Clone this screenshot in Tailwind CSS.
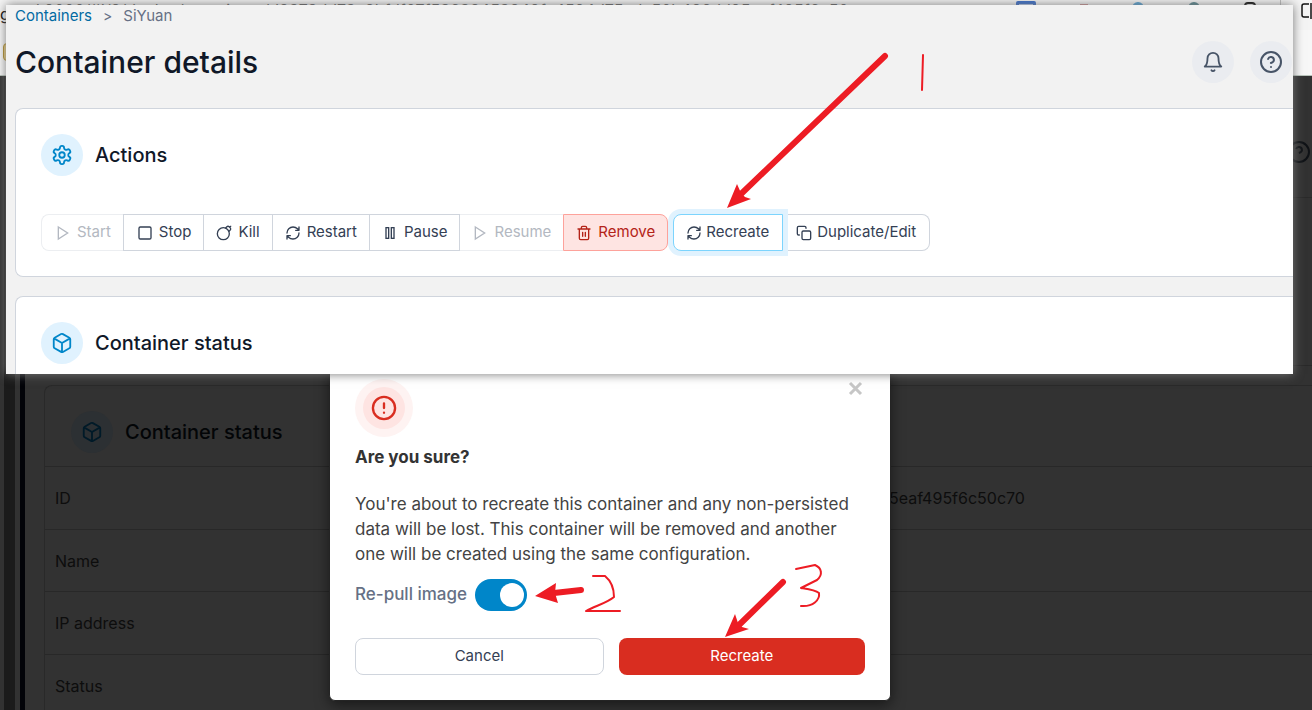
<!DOCTYPE html>
<html lang="en">
  <head>
    <meta charset="UTF-8" />
    <meta name="viewport" content="width=device-width, initial-scale=1.0" />
    <title>Container details</title>
    <script src="https://cdn.jsdelivr.net/npm/@tailwindcss/browser@4"></script>
  </head>
  <body class="relative h-screen overflow-hidden bg-[#323232] font-['Inter','Liberation_Sans',sans-serif] text-[#101828]">
    <!-- Shared icon shapes -->
    <svg class="hidden">
      <symbol id="play" viewBox="0 0 24 24"><path d="m5 3 14 9-14 9V3z" /></symbol>
      <symbol id="refresh" viewBox="0 0 24 24">
        <path d="M3 12a9 9 0 0 1 9-9 9.75 9.75 0 0 1 6.74 2.74L21 8M21 3v5h-5M21 12a9 9 0 0 1-9 9 9.75 9.75 0 0 1-6.74-2.74L3 16M8 16H3v5" />
      </symbol>
      <symbol id="box" viewBox="0 0 24 24">
        <path d="M21 8a2 2 0 0 0-1-1.730l-7-4a2 2 0 0 0-2 0l-7 4A2 2 0 0 0 3 8v8a2 2 0 0 0 1 1.730l7 4a2 2 0 0 0 2 0l7-4A2 2 0 0 0 21 16ZM3.300 7 12 12l8.700-5M12 22V12" />
      </symbol>
      <symbol id="help" viewBox="0 0 24 24">
        <circle cx="12" cy="12" r="10" />
        <path d="M9.090 9a3 3 0 0 1 5.830 1c0 2-3 3-3 3M12 17h.01" />
      </symbol>
    </svg>

    <div class="flex h-full flex-col">
      <!-- Browser toolbar -->
      <div class="flex h-[76px] shrink-0 flex-col justify-between border-b border-[#b9c4bb] bg-[#f7f7f7]">
        <div class="flex h-[30px] items-start justify-between bg-[#f4f4f4]">
          <div class="flex items-start whitespace-nowrap text-base leading-5 text-[#555]">
            <span class="mt-1 w-[30px] text-black">g</span>
            <span>d 9000/#!/2/docker/containers/d8373dd73c8bfdf07f53638453849fe4594d75cdc50b426dd95eaf495f6c50</span>
          </div>
          <div class="flex items-start">
            <div class="mt-px mr-[44px] h-3 w-5 rounded-xs border-3 border-[#2f66c8] bg-[#b8cdf2]"></div>
            <div class="mt-1 mr-[44px] h-3 w-2 bg-[#c98b8b]"></div>
            <div class="mt-0.5 mr-[44px] h-3 w-3 rounded-full bg-[#4a9bd0]"></div>
            <div class="mt-0.5 mr-[44px] h-3 w-3 rounded-full bg-[#4b7d87]"></div>
            <div class="mt-0.5 mr-6 h-3 w-3 rounded-sm border-2 border-black"></div>
            <div class="mr-5 h-5 w-px bg-[#bbb]"></div>
            <svg class="mt-[3px] h-4 w-[11px]" fill="none" stroke="#111" stroke-width="1.500"><path d="M8 1H3a2 2 0 0 0-2 2v9a2 2 0 0 0 2 2h5M10 0v17" /></svg>
          </div>
        </div>
        <div class="h-[45px] pt-[13px] pl-[3px]">
          <div class="h-[18px] w-4 rounded-sm border border-[#b08a1e] bg-[#e5c877]"></div>
        </div>
      </div>

      <!-- Dimmed page -->
      <div class="flex min-h-0 grow">
        <div class="w-1 bg-[#323232]"></div>
        <div class="w-[11px] bg-[#1b1b1b]"></div>
        <div class="w-[5px] bg-[#323232]"></div>
        <div class="w-[5px] bg-[#020308]"></div>
        <div class="flex grow flex-col">
          <div class="flex h-[122px] shrink-0 items-start justify-end border-b border-[#2a2a2a] pt-16 pr-px">
            <svg class="size-[24px] fill-none stroke-[#0f1216] stroke-2"><use href="#help" /></svg>
          </div>
          <div class="h-[168px] shrink-0 border-b border-[#292929]"></div>
          <div class="mt-[19px] ml-[19px] grow rounded-tl-lg border-t border-l border-[#292929]">
            <div class="flex h-20 items-center gap-3 pt-3 pl-[26px]">
              <div class="flex size-[42px] items-center justify-center rounded-full bg-[#2c3033]">
                <svg class="size-[22px] fill-none stroke-[#001a28] stroke-2"><use href="#box" /></svg>
              </div>
              <h2 class="text-xl font-medium text-[#030507]">Container status</h2>
            </div>
            <table class="w-full text-base text-[#0d0d0d]">
              <tbody>
                <tr class="h-[63px] border-t border-[#282828]"><td class="w-[844px] pl-2.5">ID</td><td>5eaf495f6c50c70</td></tr>
                <tr class="h-[62px] border-t border-[#282828]"><td class="pl-2.5">Name</td><td></td></tr>
                <tr class="h-[63px] border-t border-[#282828]"><td class="pl-2.5">IP address</td><td></td></tr>
                <tr class="h-[62px] border-t border-[#282828]"><td class="pl-2.5">Status</td><td></td></tr>
              </tbody>
            </table>
          </div>
        </div>
      </div>
    </div>

    <!-- Confirm dialog -->
    <div role="dialog" aria-labelledby="confirm-title" class="absolute bottom-[9px] left-[329px] w-[562px] rounded-md border border-[#242424] bg-white px-[25px] pt-6 pb-[25px] shadow-[0_4px_14px_rgba(0,0,0,0.5)]">
      <div class="flex items-start justify-between">
        <div class="flex size-[58px] items-center justify-center rounded-full bg-[#fef3f2]">
          <div class="flex size-[42px] items-center justify-center rounded-full bg-[#fee4e2]">
            <svg class="size-[28px]" viewBox="0 0 24 24" fill="none" stroke="#d92d20" stroke-width="2" stroke-linecap="round"><circle cx="12" cy="12" r="9.500" /><path d="M12 8v4M12 16h.01" /></svg>
          </div>
        </div>
        <button aria-label="Close" class="text-[#c6c6c6]">
          <svg class="size-[18px]" viewBox="0 0 18 18" stroke="currentColor" stroke-width="3"><path d="m3 4 11 11M14 4 3 15" /></svg>
        </button>
      </div>
      <h5 id="confirm-title" class="mt-2 text-[17px] leading-[25px] font-bold text-[#333]">Are you sure?</h5>
      <p class="mt-[22px] text-[17px] leading-[25px] text-[#434343]">
        You're about to recreate this container and any non-persisted data will be lost. This container will be removed and another one will be created using the same configuration.
      </p>
      <div class="mt-3 flex items-center gap-2">
        <label for="repull" class="text-[17px] font-medium text-[#667085]">Re-pull image</label>
        <input id="repull" type="checkbox" checked class="h-8 w-[52px] appearance-none rounded-full bg-[#0086c9] before:mt-1 before:ml-[25px] before:block before:size-6 before:rounded-full before:bg-white" />
      </div>
      <div class="mt-[27px] flex gap-[15px]">
        <button class="h-[37px] flex-1 rounded-lg border border-[#d0d5dd] text-[15px] text-[#344054]">Cancel</button>
        <button class="h-[37px] flex-1 rounded-lg bg-[#d92d20] text-[15px] text-white">Recreate</button>
      </div>
    </div>

    <!-- Front window -->
    <main class="absolute top-[5px] right-[19px] left-[6px] h-[369px] overflow-hidden bg-[#f2f2f2] pl-[9px] shadow-[0_0_10px_#777777]">
      <nav class="flex h-[22px] items-center gap-[11px] text-[15px]">
        <a href="#" class="text-[#026aa2]">Containers</a>
        <span class="text-sm text-[#667085]">&gt;</span>
        <span class="text-[#667085]">SiYuan</span>
      </nav>
      <header class="mt-3.5 flex h-[42px] items-center justify-between">
        <h1 class="text-[30px] font-medium">Container details</h1>
        <div class="flex gap-4 pr-px text-[#475467]">
          <button aria-label="Notifications" class="flex size-[42px] items-center justify-center rounded-full bg-[#eaecf0]">
            <svg class="size-[22px]" viewBox="0 0 24 24" fill="none" stroke="currentColor" stroke-width="2" stroke-linecap="round" stroke-linejoin="round"><path d="M6 8a6 6 0 0 1 12 0c0 7 3 9 3 9H3s3-2 3-9M10.300 21a1.940 1.940 0 0 0 3.400 0" /></svg>
          </button>
          <button aria-label="Help" class="flex size-[42px] items-center justify-center rounded-full bg-[#eaecf0]">
            <svg class="size-[24px] fill-none stroke-current stroke-2" stroke-linecap="round"><use href="#help" /></svg>
          </button>
        </div>
      </header>

      <section class="mt-[25px] h-[169px] rounded-l-lg border border-r-0 border-[#d0d5dd] bg-white px-[25px] pt-[25px]">
        <div class="flex items-center gap-3">
          <div class="flex size-[42px] items-center justify-center rounded-full bg-[#e0f2fe] text-[#0086c9]">
            <svg class="size-[22px]" viewBox="0 0 24 24" fill="none" stroke="currentColor" stroke-width="2" stroke-linecap="round" stroke-linejoin="round">
              <path d="M12.220 2h-.44a2 2 0 0 0-2 2v.18a2 2 0 0 1-1 1.730l-.43.25a2 2 0 0 1-2 0l-.15-.08a2 2 0 0 0-2.730.73l-.22.38a2 2 0 0 0 .73 2.730l.15.1a2 2 0 0 1 1 1.720v.51a2 2 0 0 1-1 1.740l-.15.09a2 2 0 0 0-.73 2.730l.22.38a2 2 0 0 0 2.730.73l.15-.08a2 2 0 0 1 2 0l.43.25a2 2 0 0 1 1 1.730V20a2 2 0 0 0 2 2h.44a2 2 0 0 0 2-2v-.18a2 2 0 0 1 1-1.730l.43-.25a2 2 0 0 1 2 0l.15.08a2 2 0 0 0 2.730-.73l.22-.39a2 2 0 0 0-.73-2.730l-.15-.08a2 2 0 0 1-1-1.740v-.5a2 2 0 0 1 1-1.740l.15-.09a2 2 0 0 0 .73-2.730l-.22-.38a2 2 0 0 0-2.730-.73l-.15.08a2 2 0 0 1-2 0l-.43-.25a2 2 0 0 1-1-1.730V4a2 2 0 0 0-2-2z" />
              <circle cx="12" cy="12" r="3" />
            </svg>
          </div>
          <h2 class="text-xl font-medium">Actions</h2>
        </div>

        <div class="mt-[38px] flex gap-[5px] text-[15px] text-[#344054]">
          <div class="flex">
            <button disabled class="flex h-[37px] items-center gap-1.5 rounded-l-lg border border-r-0 border-[#eceef1] pr-3 pl-[13px] text-[#b3b8c1]">
              <svg class="size-4 fill-none stroke-current stroke-2"><use href="#play" /></svg>Start
            </button>
            <button class="flex h-[37px] items-center gap-1.5 border border-[#d0d5dd] pr-3 pl-[13px]">
              <svg class="size-4" viewBox="0 0 24 24" fill="none" stroke="currentColor" stroke-width="2"><rect x="3" y="3" width="18" height="18" rx="2" /></svg>Stop
            </button>
            <button class="-ml-px flex h-[37px] items-center gap-1.5 border border-[#d0d5dd] px-3">
              <svg class="size-4" viewBox="0 0 24 24" fill="none" stroke="currentColor" stroke-width="2" stroke-linecap="round" stroke-linejoin="round"><circle cx="11" cy="13" r="9" /><path d="m19.500 9.500 1.800-1.800a2.400 2.400 0 0 0 0-3.400l-1.600-1.600a2.410 2.410 0 0 0-3.400 0l-1.800 1.800M22 2l-1.500 1.500" /></svg>Kill
            </button>
            <button class="-ml-px flex h-[37px] items-center gap-1.5 border border-[#d0d5dd] px-3">
              <svg class="size-4 fill-none stroke-current stroke-2" stroke-linecap="round" stroke-linejoin="round"><use href="#refresh" /></svg>Restart
            </button>
            <button class="-ml-px flex h-[37px] items-center gap-1.5 border border-[#d0d5dd] px-3">
              <svg class="size-4" viewBox="0 0 24 24" fill="none" stroke="currentColor" stroke-width="2"><rect x="6" y="4" width="4" height="16" /><rect x="14" y="4" width="4" height="16" /></svg>Pause
            </button>
            <button disabled class="flex h-[37px] items-center gap-1.5 border-y border-[#eceef1] px-3 text-[#b3b8c1]">
              <svg class="size-4 fill-none stroke-current stroke-2"><use href="#play" /></svg>Resume
            </button>
            <button class="flex h-[37px] items-center gap-1.5 rounded-r-lg border border-[#fda29b] bg-[#fee4e2] px-3 text-[#b42318]">
              <svg class="size-4" viewBox="0 0 24 24" fill="none" stroke="currentColor" stroke-width="2" stroke-linecap="round" stroke-linejoin="round"><path d="M3 6h18M19 6v14a2 2 0 0 1-2 2H7a2 2 0 0 1-2-2V6M8 6V4a2 2 0 0 1 2-2h4a2 2 0 0 1 2 2v2M10 11v6M14 11v6" /></svg>Remove
            </button>
          </div>
          <div class="flex">
            <button class="z-10 flex h-[37px] items-center gap-1 rounded-l-lg border border-[#7cd4fd] bg-white pr-[13px] pl-3 ring-5 ring-[#e0f2fe]">
              <svg class="size-4 fill-none stroke-current stroke-2" stroke-linecap="round" stroke-linejoin="round"><use href="#refresh" /></svg>Recreate
            </button>
            <button class="flex h-[37px] items-center gap-[5px] rounded-r-lg border border-l-0 border-[#d0d5dd] px-[13px]">
              <svg class="size-4" viewBox="0 0 24 24" fill="none" stroke="currentColor" stroke-width="2" stroke-linecap="round" stroke-linejoin="round"><rect x="9" y="9" width="13" height="13" rx="2" /><path d="M5 15H4a2 2 0 0 1-2-2V4a2 2 0 0 1 2-2h9a2 2 0 0 1 2 2v1" /></svg>Duplicate/Edit
            </button>
          </div>
        </div>
      </section>

      <section class="mt-[19px] h-[169px] rounded-l-lg border border-r-0 border-[#d0d5dd] bg-white px-[25px] pt-[25px]">
        <div class="flex items-center gap-3">
          <div class="flex size-[42px] items-center justify-center rounded-full bg-[#e0f2fe] text-[#0086c9]">
            <svg class="size-[22px] fill-none stroke-current stroke-2" stroke-linecap="round" stroke-linejoin="round"><use href="#box" /></svg>
          </div>
          <h2 class="text-xl font-medium">Container status</h2>
        </div>
      </section>
    </main>

    <!-- Hand-drawn step markers -->
    <svg class="pointer-events-none absolute top-0 left-0 z-20 h-[710px] w-[1312px]" fill="none" stroke="#ed1c24" stroke-linecap="round" stroke-linejoin="round">
      <path stroke-width="6" d="M885 56 741 194M581 590l-27 3M783 582l-44 43" />
      <path stroke="none" fill="#ed1c24" d="m727 208 10-24 4 9 4 4 6 2ZM535 596l21-13-1 10 3 10ZM725 637l10-23 3 9 4 4 7 2Z" />
      <path stroke-width="2" d="M923 55l-1 35" />
      <path stroke-width="2" d="M593 576h12c6 5 9 13 9 21-7 6-19 9-28 14l34 0" />
      <path stroke-width="2" d="M796 569l19-4c7 3 8 10 2 15l-16 8c6 1 14 2 18 5 1 7-6 14-18 13" />
    </svg>
  </body>
</html>
